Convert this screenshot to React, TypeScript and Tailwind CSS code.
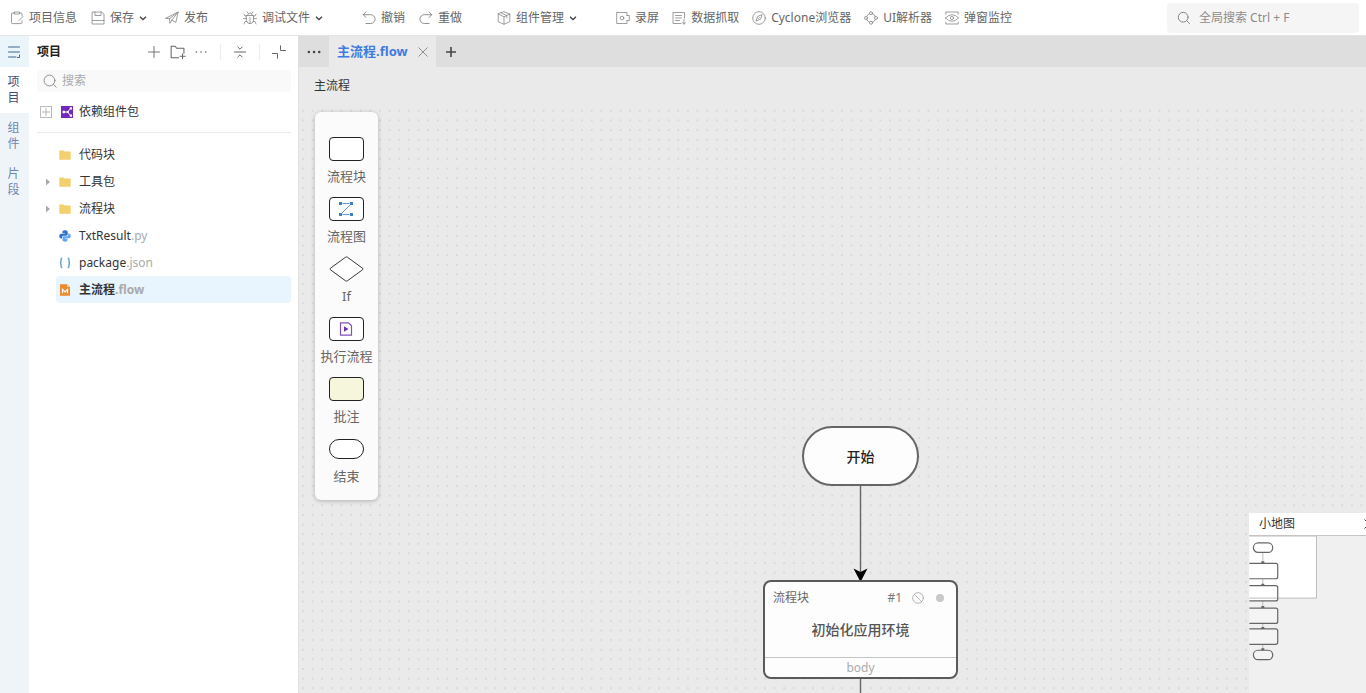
import { useState } from 'react';
import type { ReactNode } from 'react';

interface IconProps {
  children: ReactNode;
  className?: string;
}

function Icon({ children, className = 'size-3.5 text-[#858585]' }: IconProps) {
  return (
    <svg
      viewBox="0 0 14 14"
      fill="none"
      stroke="currentColor"
      strokeLinecap="round"
      strokeLinejoin="round"
      className={`shrink-0 ${className}`}
      aria-hidden="true"
    >
      {children}
    </svg>
  );
}

interface ToolItem {
  label: string;
  icon: ReactNode;
  menu?: boolean;
}

const toolGroups: ToolItem[][] = [
  [
    {
      label: '项目信息',
      icon: <path d="M4.5 2H2.3q-.8 0-.8.8v9q0 .8.8.8h8.9q.8 0 .8-.8V9.5M9.5 2h1.7q.8 0 .8.8v2M4.5 1h5v2h-5zM13 5.5 9 9.5" strokeWidth=".8" />,
    },
    {
      label: '保存',
      menu: true,
      icon: <path d="M1.5 1h9.3l2.2 2.2V13H1.5zM4 1v3.5h6V1M1.5 9.5H4M10.5 9.5H13M4.5 9.5h5" strokeWidth=".8" />,
    },
    {
      label: '发布',
      icon: <path d="M.8 7.2 13.2 1l-2.4 10.4-4-2.3-1.9 3.2-.5-4.5zM4.4 7.8 13.2 1 6.8 9.1" strokeWidth=".8" />,
    },
  ],
  [
    {
      label: '调试文件',
      menu: true,
      icon: <path d="M3.5 4.5h7v5.2q-.8 3-3.5 3-2.7 0-3.5-3zM4.6 4.3Q4.8 2 7 2t2.4 2.3M7 6.5v6M.5 7.6h3M10.5 7.6h3M1 3.2l1 1.8h1.5M13 3.2 12 5h-1.5M1 13l1-2.5h1.7M13 13l-1-2.5h-1.7M4 .8l1.2 1.5M10 .8 8.8 2.3" strokeWidth=".8" />,
    },
  ],
  [
    {
      label: '撤销',
      icon: <path d="M4 1 1.2 3.7 4 6.5M1.5 3.7h7.2a4.3 4.3 0 0 1 0 8.8H4" strokeWidth=".9" />,
    },
    {
      label: '重做',
      icon: <path d="M10 1l2.8 2.7L10 6.5M12.5 3.7H5.3a4.3 4.3 0 0 0 0 8.8H10" strokeWidth=".9" />,
    },
  ],
  [
    {
      label: '组件管理',
      menu: true,
      icon: <path d="M7 .8 12.8 3v7.8L7 13.2 1.2 10.8V3zM1.2 3 7 5.8 12.8 3M7 5.8v7.4M4 1.9l5.8 2.6v2.2" strokeWidth=".8" />,
    },
  ],
  [
    {
      label: '录屏',
      icon: (
        <>
          <path d="M11 4.5V1.5H.7v11H11v-3M11 4.5h2.3v5H11" strokeWidth=".8" />
          <circle cx="6" cy="7" r="1.8" strokeWidth=".8" />
        </>
      ),
    },
    {
      label: '数据抓取',
      icon: <path d="M9 12.5H1v-11h11.5V7M3.5 4.5h6M3.5 7h6M3.5 9.5h4M12 8.5v4.5M10.3 11.5l1.7 1.7 1.7-1.7" strokeWidth=".8" />,
    },
    {
      label: 'Cyclone浏览器',
      icon: (
        <>
          <circle cx="7" cy="7" r="6.3" strokeWidth=".8" />
          <path d="M10 4 8.5 8.2 4 10l1.6-4.3zM6.5 7.5l1-1" strokeWidth=".8" />
        </>
      ),
    },
    {
      label: 'UI解析器',
      icon: (
        <>
          <path d="M5.5 2.8 3.8 3.8l-1 1.7M8.5 2.8l1.7 1 1 1.7M5.5 11.2l-1.7-1-1-1.7M8.5 11.2l1.7-1 1-1.7" strokeWidth=".8" />
          <circle cx="7" cy="2.2" r="1.5" strokeWidth=".8" />
          <circle cx="7" cy="11.8" r="1.5" strokeWidth=".8" />
          <circle cx="2" cy="7" r="1.5" strokeWidth=".8" />
          <circle cx="12" cy="7" r="1.5" strokeWidth=".8" />
        </>
      ),
    },
    {
      label: '弹窗监控',
      icon: (
        <>
          <path d="M.8 3V1h12.4v2M.8 11v2h12.4v-2M.5 7Q3.5 3.7 7 3.7T13.5 7Q10.5 10.3 7 10.3T.5 7z" strokeWidth=".8" />
          <circle cx="7" cy="7" r="1.6" strokeWidth=".8" />
        </>
      ),
    },
  ],
];

const sideTabs = ['项目', '组件', '片段'];

const folderIcon = (
  <svg viewBox="0 0 12 12" className="size-3 shrink-0" aria-hidden="true">
    <path d="M.3 2.2q0-.6.6-.6h3.6l1 1h5.6q.6 0 .6.6v7q0 .5-.6.5H.9q-.6 0-.6-.5z" fill="#f2d06e" />
  </svg>
);

const pythonIcon = (
  <svg viewBox="0 0 12 12" className="size-3 shrink-0" aria-hidden="true">
    <path d="M6 .3C3.8.3 3.5 1.2 3.5 2v1.2H6v.5H2.2C1 3.7.2 4.7.2 6.1s.8 2.5 1.9 2.5H3V7.3c0-1 .8-1.6 1.7-1.6h2.7c.8 0 1.3-.6 1.3-1.4V2C8.7.8 7.5.3 6 .3z" fill="#2f73c9" />
    <path d="M6 11.7c2.2 0 2.5-.9 2.5-1.7V8.8H6v-.5h3.8c1.2 0 2-1 2-2.4s-.8-2.5-1.9-2.5H9.2v1.3c0 1-.8 1.6-1.7 1.6H4.8c-.8 0-1.3.6-1.3 1.4V10c0 1.2 1 1.7 2.5 1.7z" fill="#64a8f5" />
  </svg>
);

const jsonIcon = (
  <svg viewBox="0 0 12 12" fill="none" stroke="#5f9fd0" strokeWidth="1.4" className="size-3 shrink-0" aria-hidden="true">
    <path d="M3.3 1.3Q2 1.3 2 3v1.5Q2 6 .9 6 2 6 2 7.5V9q0 1.7 1.3 1.7M8.7 1.3Q10 1.3 10 3v1.5Q10 6 11.1 6 10 6 10 7.5V9q0 1.7-1.3 1.7" />
  </svg>
);

const flowIcon = (
  <svg viewBox="0 0 12 12" className="size-3 shrink-0" aria-hidden="true">
    <path d="M1 .2h7.2L11 3v8.8H1z" fill="#ea8b2d" />
    <path d="M8.2.2 11 3H8.2z" fill="#f8d3a8" />
    <path d="M3.5 9.3V5.4L6 8l2.5-2.6v3.9" fill="none" stroke="#fff" strokeWidth="1.2" />
  </svg>
);

const treeItems = [
  { name: '代码块', ext: '', icon: folderIcon, expandable: false },
  { name: '工具包', ext: '', icon: folderIcon, expandable: true },
  { name: '流程块', ext: '', icon: folderIcon, expandable: true },
  { name: 'TxtResult', ext: '.py', icon: pythonIcon, expandable: false },
  { name: 'package', ext: '.json', icon: jsonIcon, expandable: false },
  { name: '主流程', ext: '.flow', icon: flowIcon, expandable: false },
];

const box = 'flex h-6 w-[35px] items-center justify-center rounded border border-[#222]';

const paletteItems = [
  { label: '流程块', shape: <span className={`${box} bg-white`} /> },
  {
    label: '流程图',
    shape: (
      <span className={`${box} bg-white`}>
        <svg viewBox="0 0 14 14" className="size-3.5" aria-hidden="true">
          <path d="M3.5 1.5h7M11.5 2.5l-9 9M3.5 12.5h7" stroke="#5b9bd5" fill="none" />
          <path d="M0 0h3v3H0zM11 0h3v3h-3zM0 11h3v3H0zM11 11h3v3h-3z" fill="#3f7fc0" />
        </svg>
      </span>
    ),
  },
  {
    label: 'If',
    shape: (
      <svg viewBox="0 0 36 26" className="h-[26px] w-[35px]" aria-hidden="true">
        <path d="M17 .9q1-.6 2 0l15.5 11.3q1 .8 0 1.6L19 25.1q-1 .6-2 0L1.5 13.8q-1-.8 0-1.6z" fill="#fff" stroke="#333" />
      </svg>
    ),
  },
  {
    label: '执行流程',
    shape: (
      <span className={`${box} bg-white`}>
        <svg viewBox="0 0 14 14" className="size-3.5" aria-hidden="true">
          <path d="M1.5.8h8l3 3v9.4h-11z" fill="none" stroke="#8350b8" strokeWidth="1.2" />
          <path d="M5 4.3 9.5 7 5 9.7z" fill="#6b34a8" />
        </svg>
      </span>
    ),
  },
  { label: '批注', shape: <span className={`${box} bg-[#f6f6dc]`} /> },
  { label: '结束', shape: <span className="h-5 w-[35px] rounded-full border border-[#222] bg-white" /> },
];

function Toolbar() {
  return (
    <header className="flex h-[35px] shrink-0 items-center justify-between bg-white pr-[7px] pl-2.5">
      <nav className="flex items-center gap-[35px]">
        {toolGroups.map((group) => (
          <div key={group[0].label} className={`flex items-center ${group.length > 3 ? 'gap-[13px]' : 'gap-3.5'}`}>
            {group.map((item) => (
              <button key={item.label} className={`flex items-center gap-[5px] whitespace-nowrap ${item.menu ? 'pr-1' : ''}`}>
                <Icon>{item.icon}</Icon>
                <span>{item.label}</span>
                {item.menu && (
                  <svg viewBox="0 0 8 8" className="size-2 text-[#444]" fill="none" stroke="currentColor" strokeWidth="1.3" aria-hidden="true">
                    <path d="M1 2.7l3 2.8 3-2.8" />
                  </svg>
                )}
              </button>
            ))}
          </div>
        ))}
      </nav>
      <label className="flex h-[30px] w-48 items-center gap-2 rounded-sm bg-[#f5f5f5] px-2.5">
        <Icon>
          <circle cx="6.2" cy="6.2" r="4.9" />
          <path d="m9.8 9.8 2.7 2.7" />
        </Icon>
        <input aria-label="全局搜索" placeholder="全局搜索 Ctrl + F" className="min-w-0 flex-1 bg-transparent outline-none placeholder:text-[#8c8c8c]" />
      </label>
    </header>
  );
}

function SideTabs() {
  const [active, setActive] = useState('项目');

  return (
    <div className="flex w-[29px] shrink-0 flex-col bg-[#eff4f8]">
      <button aria-label="菜单" className="flex h-[31px] items-center justify-center bg-[#e9f4fb] pr-0.5 text-[#44658a]">
        <Icon className="size-3.5">
          <path d="M1.5 2h11M1.5 7h11M1.5 12H9" />
          <path d="M12.5 10v2.5h-2" />
        </Icon>
      </button>
      {sideTabs.map((tab) => (
        <button
          key={tab}
          onClick={() => setActive(tab)}
          className={`flex h-[46px] items-center justify-center pr-0.5 leading-4 ${active === tab ? 'bg-white text-[#3d4a80]' : 'text-[#6f86b3]'}`}
        >
          <span className="w-3 break-all">{tab}</span>
        </button>
      ))}
    </div>
  );
}

function ProjectPanel() {
  const [selected, setSelected] = useState('主流程');

  return (
    <aside className="w-[270px] shrink-0 border-r border-[#e0e0e0] bg-white pr-[7px] pl-2">
      <div className="flex h-[31px] items-center text-[#666]">
        <h2 className="flex-1 font-bold text-[#222]">项目</h2>
        <div className="flex items-center gap-[9px]">
          <button aria-label="新建">
            <Icon className="size-3.5"><path d="M7 1.5v11M1.5 7h11" strokeWidth=".9" /></Icon>
          </button>
          <button aria-label="新建文件夹">
            <Icon className="size-4"><path d="M7.5 12H1V2h3.5l1.3 1.7h6.4V8M11 8.5V13M8.8 10.8h4.5" strokeWidth=".9" /></Icon>
          </button>
          <button aria-label="更多">
            <Icon className="size-3"><path d="M1.5 7h.1M7 7h.1M12.5 7h.1" strokeWidth="1.8" /></Icon>
          </button>
        </div>
        <span className="ml-[13px] h-4 w-px bg-[#ececec]" />
        <button aria-label="全部折叠" className="mx-3">
          <Icon className="size-3.5"><path d="M1.5 7h11M4.8 2 7 4.2 9.2 2M4.8 12 7 9.8 9.2 12" /></Icon>
        </button>
        <span className="h-4 w-px bg-[#ececec]" />
        <button aria-label="收起" className="mr-[5px] ml-3">
          <Icon className="size-3.5"><path d="M8.5.8v4.7h5M.5 8.5h5v4.7" /></Icon>
        </button>
      </div>

      <label className="mt-[3px] flex h-[22px] items-center gap-[5px] rounded-sm bg-[#f9f9f9] px-1.5">
        <Icon>
          <circle cx="6.5" cy="6.5" r="5.4" strokeWidth=".9" />
          <path d="m10.5 10.5 2.7 2.7" strokeWidth=".9" />
        </Icon>
        <input aria-label="搜索" placeholder="搜索" className="min-w-0 flex-1 bg-transparent outline-none placeholder:text-[#aaa]" />
      </label>

      <div className="flex h-[41px] items-center border-b border-[#ececec] pl-[3px] text-[#333]">
        <button aria-label="展开" className="mr-[9px] flex size-3 items-center justify-center border border-[#bbb] text-[#aaa]">
          <Icon className="size-2"><path d="M7 0v14M0 7h14" strokeWidth="1.5" /></Icon>
        </button>
        <svg viewBox="0 0 12 12" className="mr-1.5 size-3" aria-hidden="true">
          <path d="M0 0h12v12H0z" fill="#7127b8" />
          <path d="M3 6h3.5M9.8 2.3 6.5 6l3.3 3.7" stroke="#fff" fill="none" strokeWidth=".9" />
          <path d="M1.5 4.7h2.6v2.6H1.5zM8.7 1.2H11v2.3H8.7zM8.7 8.5H11v2.3H8.7zM5.7 5h2v2h-2z" fill="#fff" />
        </svg>
        <span>依赖组件包</span>
      </div>

      <ul className="pt-2 text-[#333]">
        {treeItems.map((item) => (
          <li key={item.name} className="flex h-[27px] items-center">
            <span className="flex w-[19px] shrink-0 pl-2">
              {item.expandable && (
                <svg viewBox="0 0 6 8" className="h-2 w-1.5" aria-hidden="true">
                  <path d="M1 .5 5 4 1 7.5z" fill="#aaa" />
                </svg>
              )}
            </span>
            <button
              onClick={() => setSelected(item.name)}
              className={`flex h-full flex-1 items-center gap-2 rounded pl-[3px] ${selected === item.name ? 'bg-[#e8f4fe] font-bold' : ''}`}
            >
              {item.icon}
              <span>
                {item.name}
                <span className="text-[#aaa]">{item.ext}</span>
              </span>
            </button>
          </li>
        ))}
      </ul>
    </aside>
  );
}

function TabBar() {
  return (
    <div className="flex h-[31px] shrink-0 items-stretch bg-[#dedede]">
      <button aria-label="标签列表" className="flex w-[30px] items-center justify-center text-[#444]">
        <Icon className="size-3.5"><path d="M1.8 7h.1M7 7h.1M12.2 7h.1" strokeWidth="2.4" /></Icon>
      </button>
      <div className="flex items-center gap-2.5 bg-[#eaeaea] px-2">
        <span className="text-[13px] font-bold text-[#3f7be0]">主流程.flow</span>
        <button aria-label="关闭" className="text-[#888]">
          <Icon className="size-2.5"><path d="m1 1 12 12M13 1 1 13" strokeWidth="1.3" /></Icon>
        </button>
      </div>
      <button aria-label="新标签" className="px-2.5 text-[#444]">
        <Icon className="size-2.5"><path d="M7 0v14M0 7h14" strokeWidth="2.2" /></Icon>
      </button>
    </div>
  );
}

function Palette() {
  return (
    <div className="absolute top-[7px] left-4 flex w-[63px] flex-col items-center gap-[10px] rounded-md bg-[#fbfbfb] pt-6 pb-[14px] text-[13px] text-[#666] shadow-[0_1px_4px_rgba(0,0,0,0.25)]">
      {paletteItems.map((item) => (
        <button key={item.label} className="flex flex-col items-center gap-1 whitespace-nowrap">
          <span className="flex h-[26px] items-center">{item.shape}</span>
          <span className="leading-5">{item.label}</span>
        </button>
      ))}
    </div>
  );
}

function MiniMap() {
  return (
    <div className="absolute right-[-12px] bottom-0 flex h-[180px] w-[129px] flex-col bg-[#f0f0f0]">
      <div className="flex h-[22px] items-center justify-between bg-white pr-1 pl-2.5 text-[#333]">
        <span>小地图</span>
        <button aria-label="关闭小地图">
          <Icon className="size-2.5"><path d="m1 1 12 12M13 1 1 13" strokeWidth="1.3" /></Icon>
        </button>
      </div>
      <svg viewBox="0 0 129 158" className="h-[158px] w-full border-t border-[#c4c4c4]" fill="none" aria-hidden="true">
        <path d="M0 0h67.5v62.5H0" fill="#fff" stroke="#bbb" />
        <path d="M13.5 16v99" stroke="#bbb" />
        <g stroke="#666" strokeWidth="1.2">
          <rect x="4" y="7" width="19.5" height="9.5" rx="4.7" fill="#fff" />
          <path d="M0 27.5h26.5q2 0 2 2V41q0 2-2 2H0" fill="#fff" />
          <path d="M0 50h26.5q2 0 2 2v11.3q0 2-2 2H0" fill="#fff" />
          <path d="M0 72.5h26.5q2 0 2 2V86q0 2-2 2H0" fill="#f4f4f4" />
          <path d="M0 93.5h26.5q2 0 2 2V107q0 2-2 2H0" fill="#f4f4f4" />
          <rect x="4" y="115" width="19.5" height="9.5" rx="4.7" fill="#f4f4f4" />
        </g>
        <path d="M0 62.5h28" stroke="#bbb" />
        <path d="M12 25.5h3v2h-3zM12 48h3v2h-3zM12 70.5h3v2h-3zM12 91.5h3v2h-3zM12 113h3v2h-3z" fill="#666" />
      </svg>
    </div>
  );
}

function FlowCanvas() {
  return (
    <div className="relative flex-1 overflow-hidden">
      <svg className="absolute inset-0 size-full" aria-hidden="true">
        <defs>
          <pattern id="dots" width="9.623" height="9.623" patternUnits="userSpaceOnUse" x="-.8" y="1">
            <circle cx="4.8" cy="4.8" r=".85" fill="#cfcfcf" />
          </pattern>
        </defs>
        <rect width="100%" height="100%" fill="url(#dots)" />
        <path d="M561.5 380v96M561.5 573v20" stroke="#666" strokeWidth="1.4" />
        <path d="M561.5 477l-7-13.5 7 3.5 7-3.5z" fill="#000" />
      </svg>

      <div className="absolute top-[321px] left-[503px] flex h-[60px] w-[117px] items-center justify-center rounded-full border-2 border-[#666] bg-[#fdfdfd] pt-0.5 text-[14px] font-medium text-[#222]">
        开始
      </div>

      <div className="absolute top-[475px] left-[464px] flex h-[99px] w-[195px] flex-col rounded-lg border-2 border-[#5a5a5a] bg-[#fdfdfd] text-[#666]">
        <div className="flex h-[31px] items-center pr-3 pl-2">
          <span className="flex-1">流程块</span>
          <span className="mr-2.5 text-[#777]">#1</span>
          <Icon className="mr-3 size-3 text-[#aaa]">
            <circle cx="7" cy="7" r="6.2" />
            <path d="m2.7 2.7 8.6 8.6" />
          </Icon>
          <span className="size-2 rounded-full bg-[#c8c8c8]" />
        </div>
        <div className="flex-1 pt-[7px] text-center text-[14px] leading-5 font-medium text-[#555]">初始化应用环境</div>
        <div className="border-t border-[#c4c4c4] text-center leading-[19px] text-[#aaa]">body</div>
      </div>

      <Palette />
      <MiniMap />
    </div>
  );
}

export default function App() {
  return (
    <div className="flex h-screen flex-col overflow-hidden bg-white font-['Noto_Sans','Noto_Sans_CJK_SC',sans-serif] text-xs text-[#666]">
      <Toolbar />
      <div className="flex min-h-0 flex-1 border-t border-[#e4e4e4]">
        <SideTabs />
        <ProjectPanel />
        <main className="flex min-w-0 flex-1 flex-col bg-[#eaeaea]">
          <TabBar />
          <h1 className="flex h-[38px] shrink-0 items-center px-[15px] text-[#333]">主流程</h1>
          <FlowCanvas />
        </main>
      </div>
    </div>
  );
}
